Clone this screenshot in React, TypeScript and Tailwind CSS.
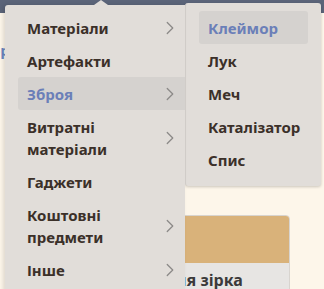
import { ChevronRight } from "lucide-react";

const MAIN = [
  { label: ["Матеріали"], sub: true },
  { label: ["Артефакти"], sub: false },
  { label: ["Зброя"], sub: true, active: true },
  { label: ["Витратні", "матеріали"], sub: true },
  { label: ["Гаджети"], sub: false },
  { label: ["Коштовні", "предмети"], sub: true },
  { label: ["Інше"], sub: true },
];

const WEAPONS = ["Клеймор", "Лук", "Меч", "Каталізатор", "Спис"];

export default function App() {
  return (
    <div
      className="relative w-[324px] h-[289px] overflow-hidden bg-[#fdf6ea]"
      style={{ fontFamily: '"Noto Sans", "Open Sans", sans-serif' }}
    >
      <div className="h-[13px] bg-[#5b6479]" />

      {/* page content behind the menu */}
      <div className="flex flex-col">
        <span className="mt-[28px] -ml-[9px] text-[15px] font-bold leading-[18px] text-[#6a86c0]">
          ор
        </span>
        <div className="ml-[120px] mt-[156px] w-[170px] rounded-tr-[4px] overflow-hidden border border-[#d8d4cf]">
          <div className="h-[47px] bg-[#d9b27a]" />
          <div className="bg-[#e7e5e3] pl-[10px] pt-[6px] text-[16px] font-bold leading-[22px] text-[#3b3a3a]">
            Вечірня зірка
          </div>
        </div>
      </div>

      {/* dropdown */}
      <div className="absolute left-[5px] top-[5px] flex items-start">
        <div className="relative w-[180px] h-[300px] rounded-l-[3px] bg-[#e1ddd9] pt-[6px] pl-[13px] shadow-[-2px_0_4px_rgba(0,0,0,0.12)]">
          <div className="absolute -top-[5px] left-[89px] w-0 h-0 border-x-[7px] border-x-transparent border-b-[5px] border-b-[#e1ddd9]" />
          {MAIN.map((item) => (
            <div
              key={item.label[0]}
              className={`flex items-center justify-between pl-[9px] pr-[4px] py-[5.5px] rounded-l-[3px] ${
                item.active ? "bg-[#d5d2cf]" : ""
              }`}
            >
              <div
                className={`text-[15px] font-bold leading-[22px] ${
                  item.active ? "text-[#6b7fb8]" : "text-[#3b3029]"
                }`}
              >
                {item.label.map((l) => (
                  <div key={l}>{l}</div>
                ))}
              </div>
              {item.sub && (
                <ChevronRight size={22} strokeWidth={1.4} className="text-[#8c8a88]" />
              )}
            </div>
          ))}
        </div>

        <div className="-mt-[2px] w-[136px] rounded-[3px] bg-[#e1ddd9] px-[13px] pt-[8px] pb-[10px] border-l border-[#d3cfcb] shadow-[0_1px_3px_rgba(0,0,0,0.2)]">
          {WEAPONS.map((w, i) => (
            <div
              key={w}
              className={`rounded-[3px] px-[9px] py-[5.5px] text-[15px] font-bold leading-[22px] ${
                i === 0 ? "bg-[#d5d2cf] text-[#6b7fb8]" : "text-[#3b3029]"
              }`}
            >
              {w}
            </div>
          ))}
        </div>
      </div>
    </div>
  );
}
